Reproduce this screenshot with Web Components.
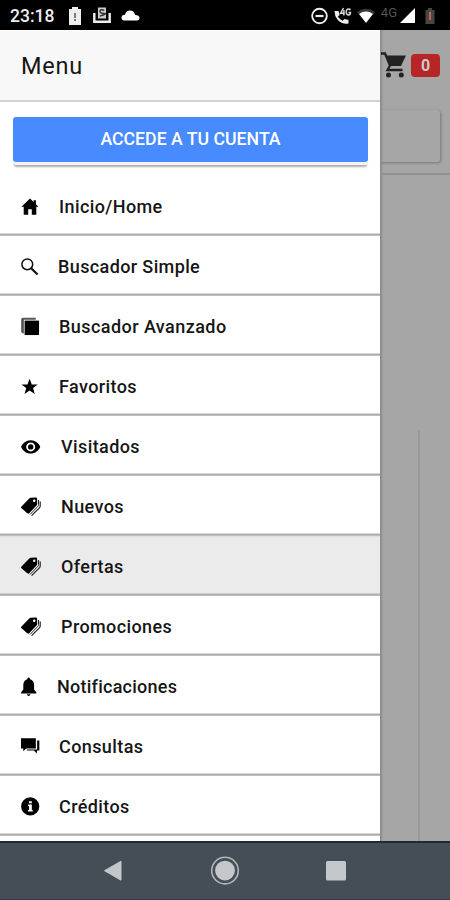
<!DOCTYPE html>
<html lang="es">
<head>
<meta charset="utf-8">
<title>Menu</title>
<style>
  html,body{margin:0;height:100%}
  body{font-family:Roboto,"Liberation Sans",sans-serif;color:#161616;background:#000;overflow:hidden}
</style>
</head>
<body>
<app-shell>
  <status-bar slot="status" time="23:18"></status-bar>
  <side-menu slot="menu" heading="Menu">
    <account-button slot="action">ACCEDE A TU CUENTA</account-button>
    <menu-item icon="home" w="38" size="18">Inicio/Home</menu-item>
    <menu-item icon="search" w="37" size="18" style="--ls:.38px">Buscador Simple</menu-item>
    <menu-item icon="albums" w="38" style="--ls:.44px">Buscador Avanzado</menu-item>
    <menu-item icon="star" w="38" size="18">Favoritos</menu-item>
    <menu-item icon="eye" w="40" size="20">Visitados</menu-item>
    <menu-item icon="tags" w="40" size="20">Nuevos</menu-item>
    <menu-item icon="tags" w="40" size="20" active>Ofertas</menu-item>
    <menu-item icon="tags" w="40" size="20">Promociones</menu-item>
    <menu-item icon="bell" w="36" size="20" style="--ls:.25px">Notificaciones</menu-item>
    <menu-item icon="chat" w="38">Consultas</menu-item>
    <menu-item icon="info" w="38">Créditos</menu-item>
  </side-menu>
  <page-behind slot="page" count="0"></page-behind>
  <nav-bar slot="nav"></nav-bar>
</app-shell>

<script>
const ICONS = {
  home: `<path d="M10 .5 .5 9.6H3V18.7H8V12.5H12V18.7H17V9.6H19.5L16.6 7V2.5H14V4.4Z"/>`,
  search: `<circle cx="7" cy="7" r="6" fill="none" stroke="#111" stroke-width="1.7"/><path d="M11 11 18.4 18.4" stroke="#111" stroke-width="2.4"/>`,
  albums: `<path d="M.2 15.5V2.4Q.2.7 2 .7H15.5V3H3V17.4Q.2 17.2.2 15.5Z" fill="#555"/><path d="M3.8 3.8H19V19H3.8Z"/>`,
  star: `<path d="M9.6 .8 12 7.2H18.6L13.4 11.2 15.3 17.8 9.6 13.9 3.9 17.8 5.8 11.2 .6 7.2H7.2Z"/>`,
  eye: `<path fill-rule="evenodd" d="M9.7 3.2C5.1 3.2 1.5 6.2.1 9.8 1.5 13.6 5.1 16.6 9.7 16.6S17.9 13.6 19.3 9.8C17.9 6.2 14.3 3.2 9.7 3.2ZM9.7 5.4A4.5 4.5 0 1 1 9.7 14.4 4.5 4.5 0 0 1 9.7 5.4Z"/><circle cx="9.7" cy="9.9" r="2.7"/>`,
  tags: `<path fill-rule="evenodd" d="M8 1.8Q8.8.9 9.8.8L14.8.5Q16 .4 16.1 1.7L16.2 6.8Q16.2 7.8 15.5 8.6L8.4 16.1Q7.4 17.1 6.3 16.2L.5 11.2Q-.3 10.4.5 9.5ZM13.2 2.5A1.3 1.3 0 1 0 13.2 5.1 1.3 1.3 0 1 0 13.2 2.5Z"/><path d="M17.5 3V7.7Q17.5 8.7 16.7 9.5L9 17.5" fill="none" stroke="#222" stroke-width="1"/><path d="M19.2 4.5V9Q19.2 10 18.4 10.8L10.6 18.7" fill="none" stroke="#222" stroke-width="1.2"/>`,
  bell: `<path d="M10 .6Q11.4.6 11.4 2.3 15.2 3.4 15.4 8V12.4L17.6 15.3V16.5H2.4V15.3L4.6 12.4V8Q4.8 3.4 8.6 2.3 8.6.6 10 .6ZM8.2 17.3H11.8Q11.4 19 10 19T8.2 17.3Z"/>`,
  chat: `<path d="M0 1.2H15.6V12H5.6L2.4 15V12H0Z"/><path d="M17 3.7H19.3V14.3H16.8V17.4L13.6 14.3H6.4V13.2H17Z"/>`,
  info: `<path fill-rule="evenodd" d="M9.7 .3A9.6 9.6 0 1 0 9.7 19.5 9.6 9.6 0 1 0 9.7 .3ZM8.4 4.4H11.4V6.7H8.4ZM7.4 8H11.4V13.8H12.4V15.3H7.4V13.8H8.5V9.5H7.4Z"/>`
};

function define(name, html) {
  customElements.define(name, class extends HTMLElement {
    constructor() { super(); this.attachShadow({ mode: "open" }); }
    connectedCallback() {
      this.shadowRoot.innerHTML = `<style>*{box-sizing:border-box}svg{display:block;flex:none}</style>` + html(this);
    }
  });
}

define("app-shell", () => `
  <style>
    :host{display:grid;grid-template:30px 811px 59px / 380px 70px;width:450px;height:900px}
    slot[name=status],slot[name=nav]{display:block;grid-column:1 / 3}
    slot[name=menu],slot[name=page]{display:block;min-width:0;min-height:0}
  </style>
  <slot name="status"></slot><slot name="menu"></slot><slot name="page"></slot><slot name="nav"></slot>`);

define("status-bar", (el) => `
  <style>
    :host{display:flex;justify-content:space-between;height:30px;background:#000;color:#eee}
    .side{display:flex;align-items:center;height:31px}
    .left{padding-left:10px}
    time{font-size:17.5px;font-weight:500;width:58px}
    .net{font-size:13px;color:#555;line-height:12px;padding-bottom:5px;letter-spacing:0}
  </style>
  <div class="side left">
    <time>${el.getAttribute("time")}</time>
    <svg width="14" height="20" viewBox="0 0 14 20"><path d="M1 3H4V1H10V3H13V19H1Z" fill="#eee"/><path d="M7 7V12M7 13V15" stroke="#555" stroke-width="1.5"/></svg>
    <svg width="18" height="20" viewBox="0 0 18 20" style="margin-left:11px"><path d="M1.3 7V15.7H16.7V7" fill="none" stroke="#eee" stroke-width="2.4"/><path d="M5 1.5H13V12.5H5Z" fill="#ccc"/><path d="M11.3 4.3Q7 2.8 7 5.2T11 7.5 6.8 10.2" fill="none" stroke="#333" stroke-width="1.4"/></svg>
    <svg width="19" height="20" viewBox="0 0 19 20" style="margin-left:10px"><path d="M4 14.5Q.5 14.5 .5 11.7T4 8.7Q5 4.5 9 4.5T14 8.7Q18.5 9.2 18.5 12T15.5 14.5Z" fill="#fff"/></svg>
  </div>
  <div class="side">
    <svg width="17" height="18" viewBox="0 0 17 18"><circle cx="8.5" cy="9" r="7.3" fill="none" stroke="#eee" stroke-width="1.9"/><path d="M4.5 9H12.5" stroke="#eee" stroke-width="2.2"/></svg>
    <svg width="18" height="18" viewBox="0 0 18 18" style="margin-left:6px"><path d="M.5 4H4.5L5.6 8 3.8 9.7Q6 12.5 8.5 13.8L10.5 12 14.5 13V16.5Q8 17.5 3.6 12.8 .5 9 .5 4Z" fill="#eee"/><path d="M9.5 1 6.5 6.3H10.8M9.9 3V8.5M16.5 3Q15.4 1.6 13.7 2.2 12.1 3 12.2 5 12.4 8 14.5 8 16.5 8 16.5 5.5H14.5" fill="none" stroke="#ddd" stroke-width="1.4"/></svg>
    <svg width="20" height="18" viewBox="0 0 20 18" style="margin-left:4px"><path d="M1 5Q10-1.6 19 5L17 7.4Q10 2.6 3 7.4Z" fill="#3a3a3a"/><path d="M3 7Q10 2.2 17 7L10 16Z" fill="#fff"/></svg>
    <span class="net" style="margin-left:5px">4G</span>
    <svg width="15" height="18" viewBox="0 0 15 18" style="margin-left:3px"><path d="M15 1V16H0Z" fill="#fff"/></svg>
    <svg width="10" height="18" viewBox="0 0 10 18" style="margin:0 15px 0 10px"><path d="M.5 3H3V1H7V3H9.5V17H.5Z" fill="#4b4542"/><path d="M5 5V13" stroke="#b5694e" stroke-width="2"/></svg>
  </div>`);

define("side-menu", (el) => `
  <style>
    :host{display:flex;flex-direction:column;height:811px;background:#fff;overflow:hidden}
    header{flex:none;height:72px;padding:0 21px;background:#f8f8f8;border-top:1px solid #fff;border-bottom:2px solid #d2d2d2;font-size:23.5px;line-height:70px;letter-spacing:.8px}
    .top{flex:none;height:74px;padding:15px 12px 0 13px}
    nav{display:flex;flex-direction:column}
  </style>
  <header>${el.getAttribute("heading")}</header>
  <div class="top"><slot name="action"></slot></div>
  <nav><slot></slot></nav>`);

define("account-button", () => `
  <style>
    :host{display:block}
    button{display:block;width:100%;height:45px;padding:0 0 1px;border:0;border-radius:3px;background:#488aff;color:#fff;font:500 17.7px Roboto,sans-serif;box-shadow:0 3px 0 #f3f4f6,0 6px 2px -1px #b5abab}
  </style>
  <button><slot></slot></button>`);

define("menu-item", (el) => {
  const size = el.getAttribute("size") || 19;
  return `
  <style>
    :host{display:flex;align-items:center;flex:none;height:60px;padding:1px 21px 0;font-size:18px;font-weight:500;letter-spacing:var(--ls,.4px);background:linear-gradient(#fff 57px,#b4b4b4 58px,#a4a4a4 59px,#ddd 60px);box-sizing:border-box}
    :host([active]){background:linear-gradient(#ddd,#ebebeb 2px,#ebebeb 57px,#b4b4b4 58px,#aaa 59px,#ccc 60px)}
    .icon{flex:none;width:${el.getAttribute("w")}px}
  </style>
  <div class="icon"><svg width="${size}" height="${size}" viewBox="${el.getAttribute("icon") === "bell" ? 2.3 : 0} 0 20 20" fill="#000">${ICONS[el.getAttribute("icon")]}</svg></div>
  <span><slot></slot></span>`;
});

define("page-behind", (el) => `
  <style>
    :host{display:flex;flex-direction:column;height:811px;background:#a6a6a6;box-shadow:inset 3px 0 2px -1px #8c8c8c;overflow:hidden}
    .bar{display:flex;align-items:center;flex:none;height:69px;padding:1px 0 0 1px}
    .badge{width:29px;height:23px;margin-left:4px;border-radius:4px;background:#b62626;color:#ccc;font-size:16px;font-weight:700;line-height:23px;text-align:center}
    .search{flex:none;height:76px;padding:11px 10px 0 0;border-bottom:2px solid #919191}
    .box{height:52px;border-radius:0 3px 3px 0;box-shadow:1px 1px 3px #777}
    .col{flex:1;width:40px;margin-top:255px;border-right:2px solid #999}
  </style>
  <div class="bar">
    <svg width="26" height="28" viewBox="0 0 26 28"><path d="M0 2.5H4L9 14.5 6.5 19H21.5" fill="none" stroke="#222" stroke-width="2.3"/><path d="M4.5 4.5H25L20 15H9Z" fill="#222"/><circle cx="7.5" cy="24" r="2.5" fill="#222"/><circle cx="20.3" cy="24" r="2.5" fill="#222"/></svg>
    <div class="badge">${el.getAttribute("count")}</div>
  </div>
  <div class="search"><div class="box"></div></div>
  <div class="col"></div>`);

define("nav-bar", () => `
  <style>
    :host{display:flex;align-items:center;height:59px;padding-left:103px;background:#454d56;border-top:2px solid #1a2c3a;border-bottom:1px solid #303b49;box-sizing:border-box}
  </style>
  <svg width="20" height="22" viewBox="0 0 20 22"><path d="M18 1.2V20.2L1.5 10.7Z" fill="#c4c7c9" stroke="#c4c7c9" stroke-linejoin="round"/></svg>
  <svg width="30" height="30" viewBox="0 0 30 30" style="margin-left:87px"><circle cx="15" cy="14.6" r="13.3" fill="none" stroke="#b2b7ba" stroke-width="1.6"/><circle cx="15" cy="14.6" r="9.9" fill="#c5c8ca"/></svg>
  <svg width="20" height="20" viewBox="0 0 20 20" style="margin-left:86px"><rect width="20" height="19.5" rx="1.5" fill="#c5c8ca"/></svg>`);
</script>
</body>
</html>
